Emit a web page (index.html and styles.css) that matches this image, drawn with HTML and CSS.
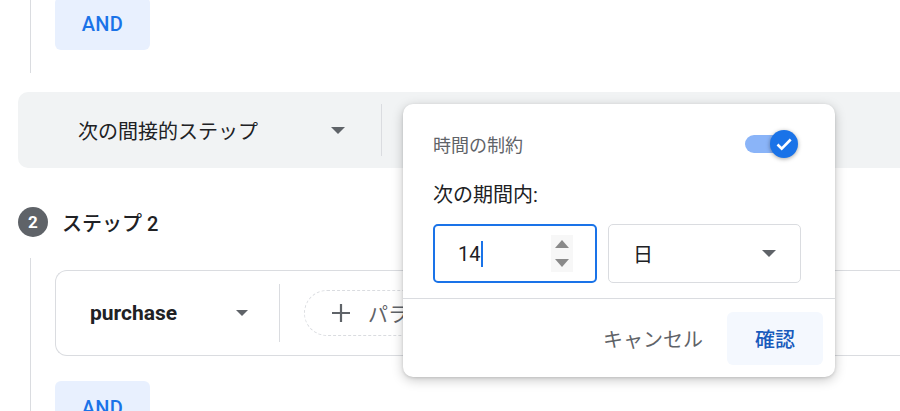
FILE: index.html
```html
<!DOCTYPE html>
<html lang="ja">
<head>
    <meta charset="UTF-8">
    <meta name="viewport" content="width=device-width, initial-scale=1.0">
    <title>ステップ</title>
    <link rel="stylesheet" href="styles.css">
</head>
<body>
    <div class="page">
        <div class="step-body step-body-top">
            <button class="and-btn and-btn-top">AND</button>
        </div>

        <div class="connector">
            <div class="connector-select">
                <span>次の間接的ステップ</span>
                <span class="arrow"></span>
            </div>
            <div class="v-divider"></div>
        </div>

        <div class="step-head">
            <span class="step-num">2</span>
            <span class="step-title">ステップ 2</span>
        </div>

        <div class="step-body">
            <div class="event-card">
                <div class="event-select">
                    <span>purchase</span>
                    <span class="arrow arrow-small"></span>
                </div>
                <div class="v-divider v-divider-card"></div>
                <div class="param-pill">
                    <svg width="20" height="20" viewBox="0 0 20 20">
                        <path d="M10 1v18M1 10h18" stroke="#5f6368" stroke-width="2.2" fill="none"/>
                    </svg>
                    <span>パラメータを追加</span>
                </div>
            </div>
            <button class="and-btn">AND</button>
        </div>

        <div class="popup">
            <div class="popup-body">
                <div class="popup-head">
                    <span class="popup-title">時間の制約</span>
                    <div class="toggle">
                        <span class="toggle-track"></span>
                        <span class="toggle-knob">
                            <svg width="28" height="28" viewBox="0 0 28 28">
                                <path d="M7.5 14.5l4.2 4.2 9-9.2" stroke="#fff" stroke-width="2.6" fill="none"/>
                            </svg>
                        </span>
                    </div>
                </div>
                <div class="popup-label">次の期間内:</div>
                <div class="fields">
                    <div class="num-field">
                        <span class="num-value">14</span><span class="caret"></span>
                        <span class="spinner">
                            <span class="spin-up"></span>
                            <span class="spin-down"></span>
                        </span>
                    </div>
                    <div class="unit-field">
                        <span>日</span>
                        <span class="arrow"></span>
                    </div>
                </div>
            </div>
            <div class="popup-footer">
                <button class="btn-cancel">キャンセル</button>
                <button class="btn-confirm">確認</button>
            </div>
        </div>
    </div>
</body>
</html>
```

FILE: styles.css
```css
* {
    margin: 0;
    padding: 0;
    box-sizing: border-box;
}

body {
    background-color: #fff;
    font-family: Roboto, "Noto Sans CJK JP", sans-serif;
    color: #202124;
    overflow: hidden;
}

.page {
    position: relative;
    width: 900px;
    height: 411px;
    overflow: hidden;
}

button {
    border: none;
    background: none;
    font-family: Roboto, "Noto Sans CJK JP", sans-serif;
    cursor: pointer;
}

/* step rails */
.step-body {
    display: flow-root;
    margin-left: 30px;
    border-left: 1px solid #dadce0;
    padding-left: 24px;
    margin-top: 21px;
    padding-top: 12px;
    height: 200px;
}

.step-body-top {
    margin-top: 0;
    padding-top: 0;
    height: 73px;
}

.and-btn {
    display: block;
    width: 95px;
    height: 53px;
    margin-top: 25px;
    background-color: #e8f0fe;
    border-radius: 6px;
    color: #1a73e8;
    font-size: 20px;
    font-weight: 500;
    letter-spacing: 0.3px;
}

.and-btn-top {
    margin-top: -3px;
}

/* connector bar */
.connector {
    display: flex;
    align-items: center;
    margin: 19px 0 0 18px;
    height: 76px;
    background-color: #f1f3f4;
    border-radius: 10px 0 0 10px;
}

.connector-select {
    display: flex;
    align-items: center;
    justify-content: space-between;
    width: 327px;
    padding-left: 60px;
    font-size: 20px;
    color: #202124;
}

.arrow {
    width: 0;
    height: 0;
    border-left: 7.5px solid transparent;
    border-right: 7.5px solid transparent;
    border-top: 7.5px solid #5f6368;
}

.arrow-small {
    border-left-width: 6px;
    border-right-width: 6px;
    border-top-width: 6px;
}

.v-divider {
    width: 1px;
    height: 52px;
    margin-left: 36px;
    background-color: #dadce0;
}

/* step 2 */
.step-head {
    display: flex;
    align-items: center;
    margin: 39px 0 0 18px;
    height: 30px;
}

.step-num {
    display: flex;
    align-items: center;
    justify-content: center;
    width: 30px;
    height: 30px;
    border-radius: 50%;
    background-color: #5f6368;
    color: #fff;
    font-size: 17px;
    font-weight: 700;
}

.step-title {
    margin-left: 14px;
    font-size: 20px;
    font-weight: 500;
}

.event-card {
    display: flex;
    align-items: center;
    height: 86px;
    border: 1px solid #dadce0;
    border-right: none;
    border-radius: 12px 0 0 12px;
}

.event-select {
    display: flex;
    align-items: center;
    justify-content: space-between;
    width: 158px;
    margin-left: 34px;
    font-size: 21px;
    font-weight: 700;
}

.v-divider-card {
    height: 58px;
    margin-left: 31px;
}

.param-pill {
    display: flex;
    align-items: center;
    height: 46px;
    margin-left: 24px;
    padding: 0 24px 0 26px;
    border: 1px dashed #dadce0;
    border-radius: 23px;
    font-size: 20px;
    color: #5f6368;
}

.param-pill span {
    margin-left: 17px;
}

/* popup */
.popup {
    position: absolute;
    left: 403px;
    top: 104px;
    width: 432px;
    height: 273px;
    background-color: #fff;
    border-radius: 10px;
    box-shadow: 0 3px 12px rgba(0, 0, 0, 0.22), 0 1px 3px rgba(0, 0, 0, 0.12);
}

.popup-body {
    padding: 20px 34px 15px 30px;
    border-bottom: 1px solid #dadce0;
}

.popup-head {
    display: flex;
    align-items: center;
    justify-content: space-between;
    height: 40px;
}

.popup-title {
    font-size: 18px;
    color: #5f6368;
}

.toggle {
    position: relative;
    width: 54px;
    height: 30px;
    margin-right: 2px;
}

.toggle-track {
    position: absolute;
    left: 0;
    top: 6px;
    width: 44px;
    height: 18px;
    border-radius: 9px;
    background-color: #8ab4f8;
}

.toggle-knob {
    position: absolute;
    left: 25px;
    top: 1px;
    width: 28px;
    height: 28px;
    border-radius: 50%;
    background-color: #1a73e8;
    box-shadow: 0 1px 4px rgba(0, 0, 0, 0.35);
}

.toggle-knob svg {
    display: block;
}

.popup-label {
    margin-top: 16px;
    height: 30px;
    line-height: 30px;
    font-size: 20px;
    color: #202124;
}

.fields {
    display: flex;
    gap: 11px;
    margin-top: 14px;
}

.num-field {
    position: relative;
    display: flex;
    align-items: center;
    width: 164px;
    height: 59px;
    padding-left: 23px;
    border: 2px solid #1a73e8;
    border-radius: 5px;
    font-size: 20px;
}

.caret {
    width: 1.5px;
    height: 26px;
    margin-left: 1px;
    background-color: #1a73e8;
}

.spinner {
    position: absolute;
    left: 116px;
    top: 9px;
    width: 22px;
    height: 37px;
    background-color: #f7f7f7;
}

.spin-up,
.spin-down {
    position: absolute;
    left: 4px;
    width: 0;
    height: 0;
    border-left: 7px solid transparent;
    border-right: 7px solid transparent;
}

.spin-up {
    top: 5px;
    border-bottom: 8px solid #8a8a8a;
}

.spin-down {
    top: 24px;
    border-top: 8px solid #8a8a8a;
}

.unit-field {
    display: flex;
    align-items: center;
    justify-content: space-between;
    width: 193px;
    height: 59px;
    padding: 0 24px 0 24px;
    border: 1px solid #dadce0;
    border-radius: 5px;
    font-size: 20px;
}

.popup-footer {
    display: flex;
    justify-content: flex-end;
    padding: 13px 12px 12px;
}

.btn-cancel {
    height: 53px;
    padding: 0 24px;
    font-size: 20px;
    color: #5f6368;
}

.btn-confirm {
    width: 96px;
    height: 53px;
    border-radius: 6px;
    background-color: #f4f8fe;
    font-size: 20px;
    font-weight: 500;
    color: #185abc;
}
```
